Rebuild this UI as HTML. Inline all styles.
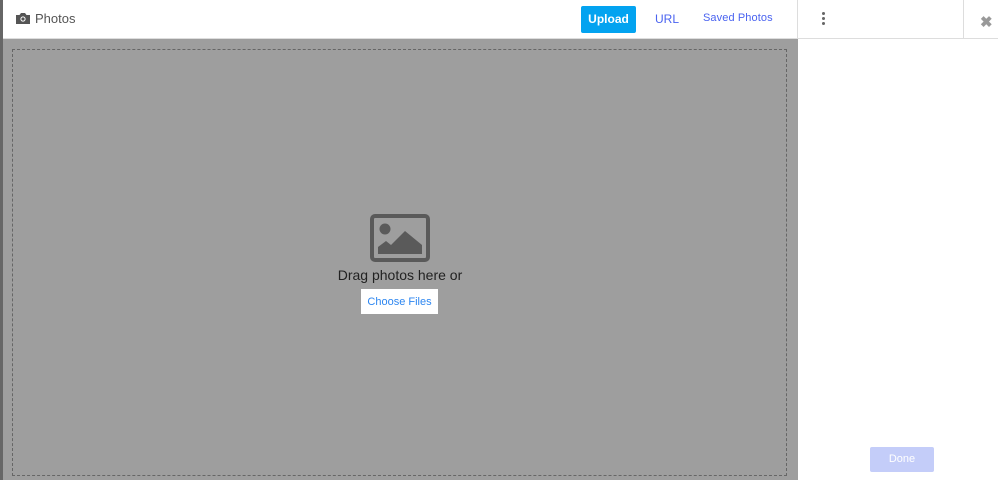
<!DOCTYPE html>
<html><head><style>
body{margin:0;width:998px;height:480px;overflow:hidden;background:#fff;font-family:"Liberation Sans",sans-serif;position:relative}
.a{position:absolute}
</style></head><body>
<div class="a" style="left:0;top:0;width:3px;height:480px;background:#666"></div>
<div class="a" style="left:3px;top:0;width:995px;height:38px;background:#fff;border-bottom:1px solid #ddd"></div>
<svg class="a" style="left:16px;top:12px" width="14" height="12" viewBox="0 0 14 12"><path d="M0 3h3.5l1.5-2h4l1.5 2H14v9H0z" fill="#555"/><circle cx="7" cy="7" r="2.6" fill="#fff"/><circle cx="7" cy="7" r="1.6" fill="#555"/></svg>
<div class="a" style="left:35px;top:11px;font-size:13px;color:#555">Photos</div>
<div class="a" style="left:581px;top:6px;width:55px;height:27px;background:#03a3f0;border-radius:2px;color:#fff;font-size:12px;font-weight:bold;text-align:center;line-height:27px">Upload</div>
<div class="a" style="left:655px;top:12px;font-size:12px;color:#4a63f0">URL</div>
<div class="a" style="left:703px;top:12px;font-size:11px;color:#4a63f0;letter-spacing:0.1px">Saved Photos</div>
<div class="a" style="left:797px;top:0;width:1px;height:38px;background:#ddd"></div>
<div class="a" style="left:963px;top:0;width:1px;height:38px;background:#ddd"></div>
<div class="a" style="left:822px;top:12px;width:3px;height:3px;border-radius:50%;background:#666;box-shadow:0 5px 0 #666,0 10px 0 #666"></div>
<div class="a" style="left:980px;top:13px;font-size:15px;color:#999;font-weight:bold">✖</div>
<div class="a" style="left:3px;top:39px;width:795px;height:441px;background:#9e9e9e"></div>
<div class="a" style="left:12px;top:49px;width:773px;height:425px;border:1px dashed #666"></div>
<svg class="a" style="left:370px;top:214px" width="60" height="48" viewBox="0 0 60 48"><rect x="2" y="2" width="56" height="44" rx="3" fill="none" stroke="#5a5a5a" stroke-width="4"/><circle cx="15" cy="15" r="5.5" fill="#5a5a5a"/><path d="M8 40V33l8-6 5 4 14-14 17 14v9z" fill="#5a5a5a"/></svg>
<div class="a" style="left:300px;top:267px;width:200px;text-align:center;font-size:14px;color:#222">Drag photos here or</div>
<div class="a" style="left:361px;top:289px;width:77px;height:25px;background:#fff;color:#2d86f0;font-size:11px;text-align:center;line-height:27px">Choose Files</div>
<div class="a" style="left:870px;top:447px;width:64px;height:25px;background:#c4cdf9;color:#fff;font-size:11px;text-align:center;line-height:25px;border-radius:2px">Done</div>
</body></html>
